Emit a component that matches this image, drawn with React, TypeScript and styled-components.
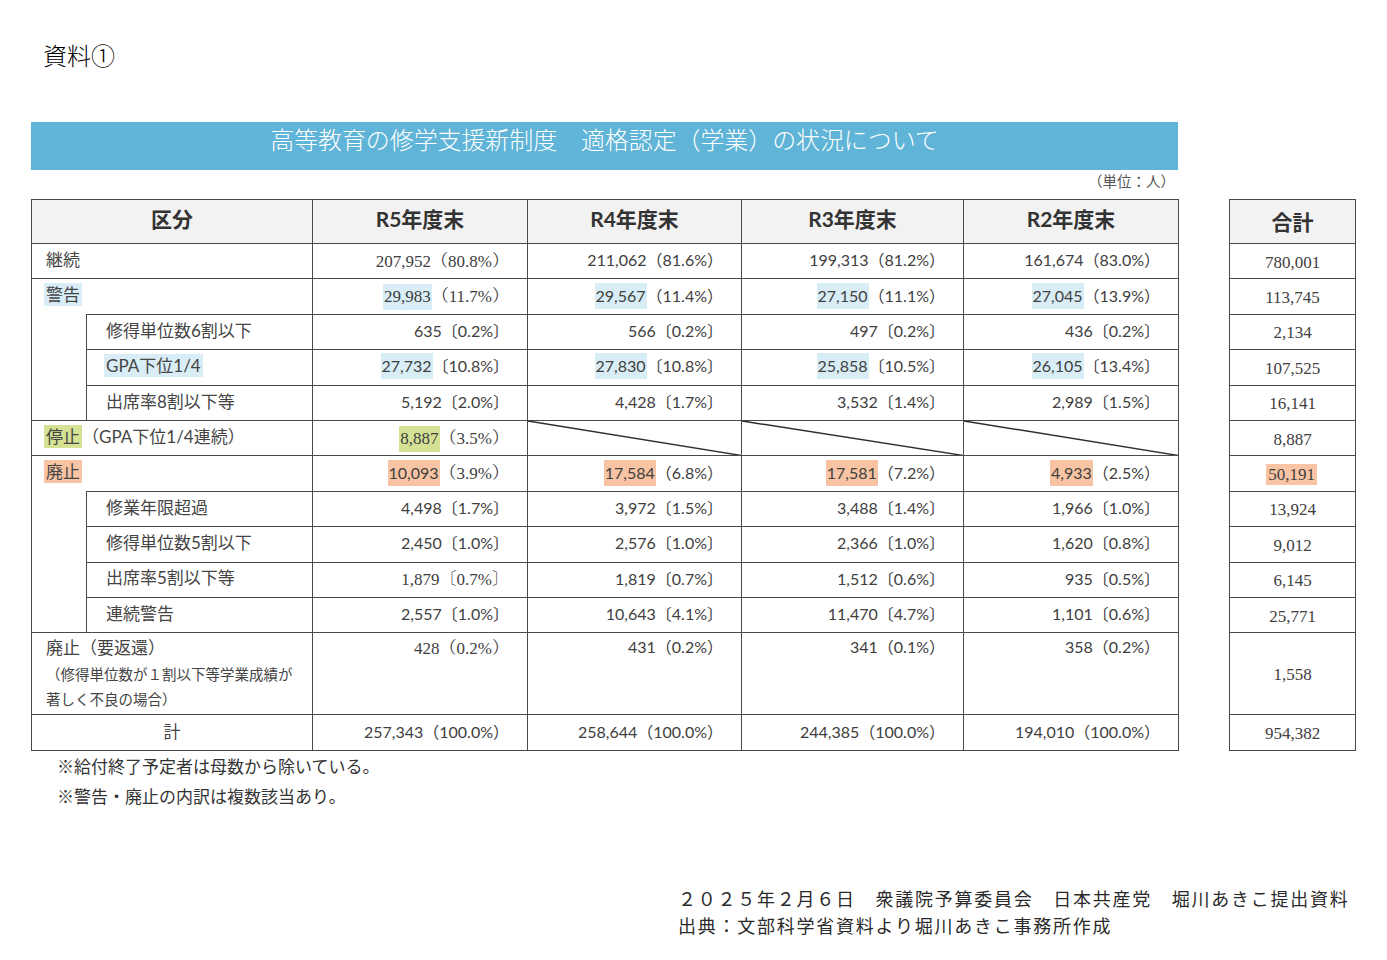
import React from 'react';
import styled, { createGlobalStyle, css } from 'styled-components';

const GlobalStyle = createGlobalStyle`
  html, body { margin: 0; padding: 0; background: #ffffff; }
  body { font-family: "Noto Sans CJK JP", sans-serif; color: #333; }
`;

const SANS = `Lato, "Noto Sans CJK JP", sans-serif`;
const SERIF = `"Liberation Serif", "Noto Serif CJK JP", "Noto Sans CJK JP", serif`;
const JP = `"Noto Sans CJK JP", sans-serif`;
const LINE = '#4a4a4a';

type Hl = 'blue' | 'green' | 'orange';
const HL: Record<Hl, string> = { blue: '#d8edf5', green: '#d5e294', orange: '#f8c4a3' };

const Page = styled.div`
  width: 1387px;
  height: 960px;
  box-sizing: border-box;
  padding: 39px 0 0 31px;
  overflow: hidden;
`;

const DocLabel = styled.div`
  font-family: ${JP};
  font-size: 24px;
  font-weight: 300;
  line-height: 32px;
  color: #000;
  margin-left: 12px;
`;

const TitleBar = styled.div`
  width: 1147px;
  height: 48px;
  margin-top: 51px;
  box-sizing: border-box;
  padding-top: 0;
  background: #60b4d7;
  color: #fff;
  text-align: center;
  font-family: ${JP};
  font-size: 24px;
  font-weight: 300;
  line-height: 34px;
  letter-spacing: -0.1px;
`;

const UnitNote = styled.div`
  width: 1147px;
  box-sizing: border-box;
  margin-top: 1px;
  padding-right: 3px;
  text-align: right;
  font-family: ${JP};
  font-size: 14.5px;
  line-height: 20px;
  color: #555;
`;

const TablesRow = styled.div`
  display: flex;
  align-items: flex-start;
  gap: 50px;
  margin-top: 8px;
`;

const Table = styled.table<{ $w: number }>`
  border-collapse: collapse;
  table-layout: fixed;
  width: ${p => p.$w}px;
`;

const Tr = styled.tr<{ $h: number }>`
  height: ${p => p.$h}px;
`;

const cellBase = css`
  border: 1px solid ${LINE};
  padding: 0;
  box-sizing: border-box;
`;

const Th = styled.th<{ $pb?: number }>`
  ${cellBase};
  background: #f2f2f2;
  font-family: ${SANS};
  font-weight: 700;
  font-size: 21px;
  color: #333;
  text-align: center;
  vertical-align: middle;
  padding-bottom: ${p => p.$pb ?? 8}px;
`;

const LabelCell = styled.td<{ $sub?: boolean; $center?: boolean; $open?: boolean; $top?: boolean }>`
  ${cellBase};
  font-family: ${SANS};
  font-size: 17px;
  color: #444;
  text-align: ${p => (p.$center ? 'center' : 'left')};
  padding-left: ${p => (p.$center ? 0 : p.$sub ? 19 : 14)}px;
  vertical-align: ${p => (p.$top ? 'top' : 'middle')};
  padding-top: ${p => (p.$top ? 2 : 0)}px;
  padding-bottom: ${p => (p.$top ? 0 : 3)}px;
  line-height: 25.5px;
  white-space: nowrap;
  ${p => p.$open && css`border-bottom: none;`}
`;

const Spacer = styled.td`
  ${cellBase};
  border-top: none;
`;

const SmallNote = styled.span`
  display: block;
  font-size: 14.5px;
  font-family: ${JP};
`;

const Mark = styled.span<{ $hl: Hl }>`
  background: ${p => HL[p.$hl]};
  padding: 1px 2px;
  margin-left: -2px;
`;

const ValueCell = styled.td<{ $top?: boolean }>`
  ${cellBase};
  text-align: right;
  padding-right: 18px;
  vertical-align: ${p => (p.$top ? 'top' : 'middle')};
  padding-top: ${p => (p.$top ? 1 : 0)}px;
  padding-bottom: ${p => (p.$top ? 0 : 4)}px;
  color: #404040;
  white-space: nowrap;
`;

const DiagCell = styled.td`
  ${cellBase};
  position: relative;
`;

const DiagLine = styled.svg`
  position: absolute;
  inset: 0;
  width: 100%;
  height: 100%;
  display: block;
`;

type FontKind = 'serif' | 'sans';

const Num = styled.span<{ $f: FontKind; $hl?: Hl }>`
  font-family: ${p => (p.$f === 'serif' ? SERIF : SANS)};
  font-size: ${p => (p.$f === 'serif' ? 17 : 16)}px;
  ${p => p.$hl && css`background: ${HL[p.$hl!]}; padding: 3px 1px 4px;`}
`;

const Pct = styled.span<{ $f: FontKind }>`
  font-family: ${p => (p.$f === 'serif' ? SERIF : SANS)};
  font-size: ${p => (p.$f === 'serif' ? 17 : 16)}px;
`;

const TotalCell = styled.td<{ $pt?: number }>`
  ${cellBase};
  text-align: center;
  vertical-align: middle;
  font-family: ${SERIF};
  font-size: 17px;
  color: #404040;
  padding-top: ${p => p.$pt ?? 3}px;
`;

const Notes = styled.div`
  margin-left: 26px;
  font-family: ${JP};
  font-size: 17px;
  line-height: 30px;
  color: #333;
`;

const Footer = styled.div`
  margin: 74px 0 0 647px;
  font-family: ${JP};
  font-size: 18px;
  letter-spacing: 1.75px;
  line-height: 26.2px;
  color: #2a2a2a;
  white-space: nowrap;
`;

type Val =
  | { n: string; p: string; f: FontKind; pf?: FontKind; hl?: Hl }
  | 'diag';

const v = (n: string, p: string, f: FontKind, hl?: Hl, pf?: FontKind): Val => ({ n, p, f, hl, pf });

type Row = {
  h: number;
  label: React.ReactNode;
  kind: 'full' | 'group' | 'sub' | 'center' | 'tall';
  spacer?: number;
  vals: Val[];
  total: { t: string; hl?: Hl };
};

const rows: Row[] = [
  {
    h: 35.4, kind: 'full', label: '継続',
    vals: [v('207,952', '（80.8%）', 'serif'), v('211,062', '（81.6%）', 'sans'), v('199,313', '（81.2%）', 'sans'), v('161,674', '（83.0%）', 'sans')],
    total: { t: '780,001' },
  },
  {
    h: 35.4, kind: 'group', label: <Mark $hl="blue">警告</Mark>,
    vals: [v('29,983', '（11.7%）', 'serif', 'blue'), v('29,567', '（11.4%）', 'sans', 'blue'), v('27,150', '（11.1%）', 'sans', 'blue'), v('27,045', '（13.9%）', 'sans', 'blue')],
    total: { t: '113,745' },
  },
  {
    h: 35.4, kind: 'sub', spacer: 3, label: '修得単位数6割以下',
    vals: [v('635', '〔0.2%〕', 'sans'), v('566', '〔0.2%〕', 'sans'), v('497', '〔0.2%〕', 'sans'), v('436', '〔0.2%〕', 'sans')],
    total: { t: '2,134' },
  },
  {
    h: 35.4, kind: 'sub', label: <Mark $hl="blue">GPA下位1/4</Mark>,
    vals: [v('27,732', '〔10.8%〕', 'sans', 'blue'), v('27,830', '〔10.8%〕', 'sans', 'blue'), v('25,858', '〔10.5%〕', 'sans', 'blue'), v('26,105', '〔13.4%〕', 'sans', 'blue')],
    total: { t: '107,525' },
  },
  {
    h: 35.4, kind: 'sub', label: '出席率8割以下等',
    vals: [v('5,192', '〔2.0%〕', 'sans'), v('4,428', '〔1.7%〕', 'sans'), v('3,532', '〔1.4%〕', 'sans'), v('2,989', '〔1.5%〕', 'sans')],
    total: { t: '16,141' },
  },
  {
    h: 35.4, kind: 'full', label: <><Mark $hl="green">停止</Mark>（GPA下位1/4連続）</>,
    vals: [v('8,887', '（3.5%）', 'serif', 'green'), 'diag', 'diag', 'diag'],
    total: { t: '8,887' },
  },
  {
    h: 35.4, kind: 'group', label: <Mark $hl="orange">廃止</Mark>,
    vals: [v('10,093', '（3.9%）', 'sans', 'orange', 'serif'), v('17,584', '（6.8%）', 'sans', 'orange'), v('17,581', '（7.2%）', 'sans', 'orange'), v('4,933', '（2.5%）', 'sans', 'orange')],
    total: { t: '50,191', hl: 'orange' },
  },
  {
    h: 35.4, kind: 'sub', spacer: 4, label: '修業年限超過',
    vals: [v('4,498', '〔1.7%〕', 'sans'), v('3,972', '〔1.5%〕', 'sans'), v('3,488', '〔1.4%〕', 'sans'), v('1,966', '〔1.0%〕', 'sans')],
    total: { t: '13,924' },
  },
  {
    h: 35.4, kind: 'sub', label: '修得単位数5割以下',
    vals: [v('2,450', '〔1.0%〕', 'sans'), v('2,576', '〔1.0%〕', 'sans'), v('2,366', '〔1.0%〕', 'sans'), v('1,620', '〔0.8%〕', 'sans')],
    total: { t: '9,012' },
  },
  {
    h: 35.4, kind: 'sub', label: '出席率5割以下等',
    vals: [v('1,879', '〔0.7%〕', 'serif'), v('1,819', '〔0.7%〕', 'sans'), v('1,512', '〔0.6%〕', 'sans'), v('935', '〔0.5%〕', 'sans')],
    total: { t: '6,145' },
  },
  {
    h: 35.4, kind: 'sub', label: '連続警告',
    vals: [v('2,557', '〔1.0%〕', 'sans'), v('10,643', '〔4.1%〕', 'sans'), v('11,470', '〔4.7%〕', 'sans'), v('1,101', '〔0.6%〕', 'sans')],
    total: { t: '25,771' },
  },
  {
    h: 82, kind: 'tall',
    label: (
      <>
        廃止（要返還）
        <SmallNote>（修得単位数が１割以下等学業成績が</SmallNote>
        <SmallNote>著しく不良の場合）</SmallNote>
      </>
    ),
    vals: [v('428', '（0.2%）', 'serif'), v('431', '（0.2%）', 'sans'), v('341', '（0.1%）', 'sans'), v('358', '（0.2%）', 'sans')],
    total: { t: '1,558' },
  },
  {
    h: 36, kind: 'center', label: '計',
    vals: [v('257,343', '（100.0%）', 'sans'), v('258,644', '（100.0%）', 'sans'), v('244,385', '（100.0%）', 'sans'), v('194,010', '（100.0%）', 'sans')],
    total: { t: '954,382' },
  },
];

const years = ['R5年度末', 'R4年度末', 'R3年度末', 'R2年度末'];
const colWidths = [55, 226, 215, 214, 222, 215];

const ValueTd: React.FC<{ val: Val; top?: boolean }> = ({ val, top }) => {
  if (val === 'diag')
    return (
      <DiagCell>
        <DiagLine viewBox="0 0 100 100" preserveAspectRatio="none" aria-hidden="true">
          <line x1="0" y1="0" x2="100" y2="100" stroke="#2e2e2e" strokeWidth="1.5" vectorEffect="non-scaling-stroke" />
        </DiagLine>
      </DiagCell>
    );
  return (
    <ValueCell $top={top}>
      <Num $f={val.f} $hl={val.hl}>{val.n}</Num>
      <Pct $f={val.pf ?? val.f}>{val.p}</Pct>
    </ValueCell>
  );
};

const LabelTds: React.FC<{ row: Row }> = ({ row }) => {
  switch (row.kind) {
    case 'sub':
      return (
        <>
          {row.spacer ? <Spacer rowSpan={row.spacer} /> : null}
          <LabelCell $sub>{row.label}</LabelCell>
        </>
      );
    case 'group':
      return <LabelCell colSpan={2} $open>{row.label}</LabelCell>;
    case 'center':
      return <LabelCell colSpan={2} $center>{row.label}</LabelCell>;
    case 'tall':
      return <LabelCell colSpan={2} $top>{row.label}</LabelCell>;
    default:
      return <LabelCell colSpan={2}>{row.label}</LabelCell>;
  }
};

export default function App() {
  return (
    <>
      <GlobalStyle />
      <Page>
        <DocLabel>資料①</DocLabel>
        <TitleBar>高等教育の修学支援新制度　適格認定（学業）の状況について</TitleBar>
        <UnitNote>（単位：人）</UnitNote>
        <TablesRow>
          <Table $w={1147}>
            <colgroup>
              {colWidths.map((w, i) => (
                <col key={i} style={{ width: w }} />
              ))}
            </colgroup>
            <thead>
              <Tr $h={44}>
                <Th colSpan={2}>区分</Th>
                {years.map(y => (
                  <Th key={y}>{y}</Th>
                ))}
              </Tr>
            </thead>
            <tbody>
              {rows.map((row, i) => (
                <Tr key={i} $h={row.h}>
                  <LabelTds row={row} />
                  {row.vals.map((val, j) => (
                    <ValueTd key={j} val={val} top={row.kind === 'tall'} />
                  ))}
                </Tr>
              ))}
            </tbody>
          </Table>
          <Table $w={127}>
            <thead>
              <Tr $h={44}>
                <Th $pb={2}>合計</Th>
              </Tr>
            </thead>
            <tbody>
              {rows.map((row, i) => (
                <Tr key={i} $h={row.h}>
                  <TotalCell>
                    {row.total.hl ? <Mark $hl={row.total.hl}>{row.total.t}</Mark> : row.total.t}
                  </TotalCell>
                </Tr>
              ))}
            </tbody>
          </Table>
        </TablesRow>
        <Notes>
          <div>※給付終了予定者は母数から除いている。</div>
          <div>※警告・廃止の内訳は複数該当あり。</div>
        </Notes>
        <Footer>
          <div>２０２５年２月６日　衆議院予算委員会　日本共産党　堀川あきこ提出資料</div>
          <div>出典：文部科学省資料より堀川あきこ事務所作成</div>
        </Footer>
      </Page>
    </>
  );
}
